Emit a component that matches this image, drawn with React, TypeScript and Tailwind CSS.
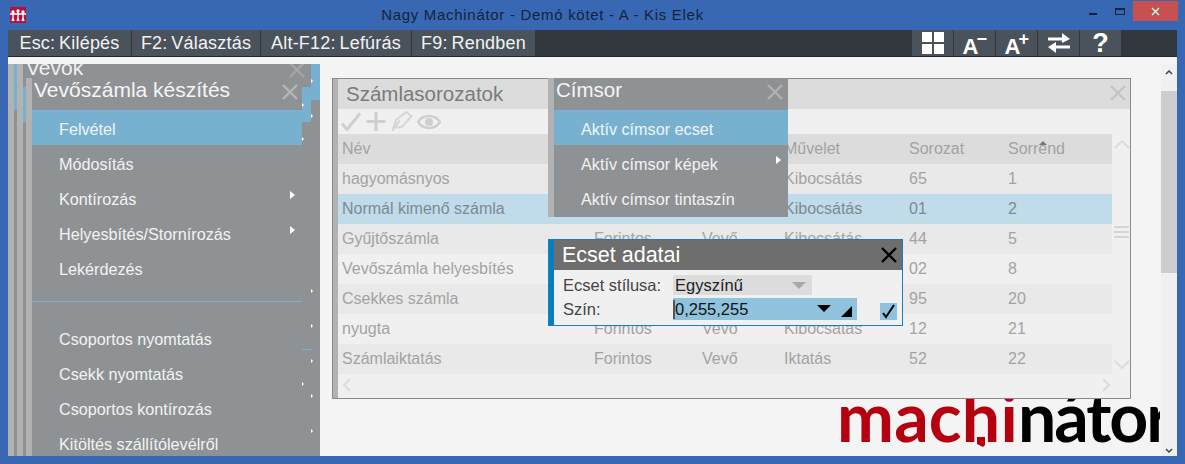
import React from 'react';

const sans = "font-['Liberation_Sans',Arial,sans-serif]";

const menuItems = [
  { label: 'Módosítás' },
  { label: 'Kontírozás', sub: true },
  { label: 'Helyesbítés/Stornírozás', sub: true },
  { label: 'Lekérdezés' },
];

const menuItems2 = [
  'Csoportos nyomtatás',
  'Csekk nyomtatás',
  'Csoportos kontírozás',
  'Kitöltés szállítólevélről',
];

const rows = [
  ['hagyomásnyos', '', '', 'Kibocsátás', '65', '1'],
  ['Normál kimenő számla', '', '', 'Kibocsátás', '01', '2'],
  ['Gyűjtőszámla', 'Forintos', 'Vevő', 'Kibocsátás', '44', '5'],
  ['Vevőszámla helyesbítés', '', '', '', '02', '8'],
  ['Csekkes számla', '', '', '', '95', '20'],
  ['nyugta', 'Forintos', 'Vevő', 'Kibocsátás', '12', '21'],
  ['Számlaiktatás', 'Forintos', 'Vevő', 'Iktatás', '52', '22'],
];

function Cross({ className, size = 18 }: { className: string; size?: number }) {
  return (
    <svg width={size} height={size} viewBox="0 0 18 18" className={className}>
      <path d="M2 2 16 16M16 2 2 16" stroke="currentColor" strokeWidth="2.4" fill="none" />
    </svg>
  );
}

function Row({ cells, index }: { cells: string[]; index: number }) {
  let bg = index % 2 === 0 ? 'bg-[#e9e9e9] text-[#a3a3a3]' : 'bg-[#f0f0f0] text-[#a3a3a3]';
  if (index === 1) bg = 'bg-[#c0dcea] text-[#7d8a92]';
  if (index === -1) bg = 'bg-[#dcdcdc] text-[#a3a3a3]';
  return (
    <div className={`flex h-[30px] items-center text-[16px] ${bg}`}>
      <span className="w-[256px] pl-1">{cells[0]}</span>
      <span className="w-[108px]">{cells[1]}</span>
      <span className="w-[82px]">{cells[2]}</span>
      <span className="w-[125px]">{cells[3]}</span>
      <span className="w-[99px]">{cells[4]}</span>
      <span>{cells[5]}</span>
    </div>
  );
}

function ToolButton({ children }: { children: React.ReactNode }) {
  return (
    <div className="flex h-[26px] w-[41px] items-center justify-center bg-[#4a535b] font-bold text-white">{children}</div>
  );
}

function FontButton({ sign }: { sign: string }) {
  return (
    <ToolButton>
      <span className="relative h-[26px] w-[26px]">
        <span className="absolute left-[1px] top-[6px] text-[22px] leading-[22px]">A</span>
        <span className="absolute left-[15px] top-0 text-[18px] leading-[18px]">{sign}</span>
      </span>
    </ToolButton>
  );
}

function Dot({ className }: { className: string }) {
  return <span className={`absolute h-0 w-0 border-y-[2px] border-l-[2px] border-y-transparent border-l-white ${className}`} />;
}

export default function App() {
  return (
    <div className={`relative flex h-[464px] w-[1185px] flex-col overflow-hidden bg-[#3867b4] ${sans}`}>
      {/* title bar */}
      <div className="relative flex h-[30px] shrink-0 items-center justify-center pr-[100px] text-[15px] tracking-[0.7px] text-[#16233a]">
        <svg width="16" height="16" viewBox="0 0 16 16" className="absolute left-[10px] top-[7px]">
          <rect width="16" height="16" fill="#b3123f" />
          <g stroke="#fff" strokeWidth="1.3" fill="#fff">
            <circle cx="3" cy="5" r="1" />
            <circle cx="8" cy="4" r="1" />
            <circle cx="13" cy="5" r="1" />
            <path d="M0 7H16M3 6V11M8 5V11M13 6V11M2 14 3 11 4 14M7 14 8 11 9 14M12 14 13 11 14 14" fill="none" />
          </g>
        </svg>
        <span>Nagy Machinátor - Demó kötet - A - Kis Elek</span>
        <span className="absolute left-[1089px] top-[13px] h-[2px] w-[8px] bg-[#10243f]" />
        <span className="absolute left-[1115px] top-[8px] h-[7px] w-[10px] border border-t-2 border-[#10243f]" />
        <div className="absolute left-[1133px] top-[1px] flex h-[20px] w-[45px] items-center justify-center bg-[#c75050] text-white">
          <Cross className="text-white" size={9} />
        </div>
      </div>

      {/* toolbar */}
      <div className="mx-2 flex h-[27px] shrink-0 items-stretch justify-between border-b border-[#22272b] bg-[#32383e]">
        <div className="flex gap-px text-[18px] tracking-[0.2px] text-[#f2f2f2]">
          <div className="flex w-[123px] items-center justify-center bg-[#4a535b]">Esc:&thinsp;Kilépés</div>
          <div className="flex w-[128px] items-center justify-center bg-[#4a535b]">F2:&thinsp;Választás</div>
          <div className="flex w-[150px] items-center justify-center bg-[#4a535b]">Alt-F12:&thinsp;Lefúrás</div>
          <div className="flex w-[123px] items-center justify-center bg-[#4a535b]">F9:&thinsp;Rendben</div>
        </div>
        <div className="mr-[56px] flex gap-px">
          <ToolButton>
            <span className="grid grid-cols-2 gap-[2px]">
              <span className="h-[10px] w-[10px] bg-white" />
              <span className="h-[10px] w-[10px] bg-white" />
              <span className="h-[10px] w-[10px] bg-white" />
              <span className="h-[10px] w-[10px] bg-white" />
            </span>
          </ToolButton>
          <FontButton sign="−" />
          <FontButton sign="+" />
          <ToolButton>
            <svg width="24" height="22" viewBox="0 0 24 22">
              <path d="M1 7H17" stroke="#fff" strokeWidth="3" />
              <path d="M15 1 23 7 15 11Z" fill="#fff" />
              <path d="M23 15H7" stroke="#fff" strokeWidth="3" />
              <path d="M9 10 1 15 9 21Z" fill="#fff" />
            </svg>
          </ToolButton>
          <ToolButton>
            <span className="text-[27px] leading-none">?</span>
          </ToolButton>
        </div>
      </div>

      {/* content */}
      <div className="relative mx-2 mb-2 flex min-h-0 flex-1 bg-[#f4f4f4] pt-[7px]">
        {/* menu stack */}
        <div className="relative flex w-[312px] shrink-0 overflow-hidden bg-[#8f9295]">
          <div className="w-[6px] shrink-0 bg-[#b2b2b2]" />
          <div className="w-[3px] shrink-0"><div className="h-[46px] bg-[#78b0d0]" /></div>
          <div className="w-[6px] shrink-0 bg-[#b2b2b2]" />
          <div className="w-[3px] shrink-0"><div className="mt-[23px] h-[35px] bg-[#78b0d0]" /></div>
          <div className="mt-[14px] w-[6px] shrink-0 bg-[#b2b2b2]" />
          <div className="relative w-[270px] shrink-0">
            <div className="flex h-[46px] items-start justify-between pl-[2px] pr-[3px] pt-[14px] text-[21px] leading-[24px] text-[#f5f5f5]">
              <span>Vevőszámla készítés</span>
              <Cross className="mt-[5px] text-[#b5b5b5]" />
            </div>
            <div className="flex h-[35px] items-center bg-[#78b0d0] pl-[27px] pt-[3px] text-[16.2px] text-[#eef5f9]">Felvétel</div>
            {menuItems.map((item) => (
              <div key={item.label} className="relative flex h-[35px] items-center pl-[27px] pt-[3px] text-[16.2px] text-[#f2f2f2]">
                {item.label}
                {item.sub && <span className="absolute right-[7px] top-[11px] h-0 w-0 border-y-[4px] border-l-[5px] border-y-transparent border-l-white" />}
              </div>
            ))}
            <div className="mt-[16px] h-px bg-[#78b0d0]" />
            <div className="mt-[18px]">
              {menuItems2.map((label) => (
                <div key={label} className="flex h-[35px] items-center pl-[27px] pt-[3px] text-[16.2px] text-[#f2f2f2]">{label}</div>
              ))}
            </div>
          </div>

          {/* right edge of the windows stacked behind */}
          <div className="relative w-[18px] shrink-0">
            <div className="absolute left-[9px] top-0 h-[36px] w-[9px] bg-[#78b0d0]" />
            <div className="absolute left-0 top-[23px] h-[35px] w-[9px] bg-[#78b0d0]" />
            <div className="absolute left-0 top-0 h-[23px] w-[9px] bg-[#8f9295]" />
            <div className="absolute left-0 top-[285px] h-px w-[10px] bg-[#78b0d0]" />
            <Dot className="left-[9px] top-[15px]" />
            <Dot className="left-0 top-[39px]" />
            <Dot className="left-[9px] top-[50px]" />
            <Dot className="left-0 top-[73px]" />
            <Dot className="left-[9px] top-[225px]" />
            <Dot className="left-[9px] top-[260px]" />
            <Dot className="left-[9px] top-[295px]" />
            <Dot className="left-0 top-[318px]" />
            <Dot className="left-[9px] top-[330px]" />
            <Dot className="left-[9px] top-[365px]" />
          </div>

          {/* behind window heading, clipped by the frame */}
          <span className="absolute left-[18px] -top-[12px] text-[21px] text-[#f0f0f0]">Vevők</span>
          <Cross className="absolute right-[14px] -top-[3px] text-[#a6a6a6]" />
        </div>

        {/* main */}
        <div className="relative flex-1 overflow-hidden pl-3 pt-[14px]">
          <div className="flex h-[321px] w-[799px] border border-[#8a8a8a] bg-[#f0f0f0]">
            <div className="w-[5px] shrink-0 bg-[#b2b2b2]" />
            <div className="flex min-w-0 flex-1 flex-col">
              <div className="relative flex h-[30px] shrink-0 items-center bg-[#dcdcdc] pl-2 text-[20.5px] text-[#7b7b7b]">
                Számlasorozatok
                <Cross className="absolute right-[3px] top-[5px] text-[#c4c4c4]" />
              </div>
              <div className="flex h-[25px] shrink-0 items-center gap-[3px] pl-[2px]">
                <svg width="22" height="21" viewBox="0 0 22 20"><path d="M2 12 7 18 20 2" stroke="#cfcfcf" strokeWidth="3" fill="none" /></svg>
                <svg width="22" height="21" viewBox="0 0 20 20"><path d="M10 1V19M1 10H19" stroke="#cfcfcf" strokeWidth="3" /></svg>
                <svg width="24" height="21" viewBox="0 0 22 20"><path d="M2 19 5 9 15 1 20 5 11 15 5 16M9 9 3 17" stroke="#d6d6d6" strokeWidth="2" fill="none" /></svg>
                <svg width="24" height="20" viewBox="0 0 24 20"><path d="M1 10C6 2 18 2 23 10 18 18 6 18 1 10Z" fill="none" stroke="#cfcfcf" strokeWidth="2.5" /><circle cx="12" cy="10" r="4" fill="#cfcfcf" /></svg>
              </div>
              <div className="flex min-h-0 flex-1">
                <div className="relative w-[774px] shrink-0">
                  <Row cells={['Név', '', '', 'Művelet', 'Sorozat', 'Sorrend']} index={-1} />
                  <span className="absolute left-[701px] top-[7px] h-0 w-0 border-x-[4px] border-b-[4px] border-x-transparent border-b-[#777]" />
                  {rows.map((r, i) => (
                    <Row key={r[0]} cells={r} index={i} />
                  ))}
                </div>
                <div className="relative flex-1">
                  <svg width="16" height="9" viewBox="0 0 16 9" className="absolute left-[2px] top-[6px]"><path d="M1 8 8 1 15 8" stroke="#dcdcdc" strokeWidth="2" fill="none" /></svg>
                  <div className="absolute left-[2px] top-[92px] flex w-[15px] flex-col gap-[3px]">
                    <span className="h-[2px] bg-[#d6d6d6]" />
                    <span className="h-[2px] bg-[#d6d6d6]" />
                    <span className="h-[2px] bg-[#d6d6d6]" />
                  </div>
                  <svg width="16" height="9" viewBox="0 0 16 9" className="absolute left-[2px] top-[226px]"><path d="M1 1 8 8 15 1" stroke="#dcdcdc" strokeWidth="2" fill="none" /></svg>
                </div>
              </div>
              <div className="mb-[6px] flex h-[14px] w-[773px] shrink-0 items-center justify-between pl-1">
                <svg width="9" height="14" viewBox="0 0 9 14"><path d="M8 1 2 7 8 13" stroke="#dcdcdc" strokeWidth="2" fill="none" /></svg>
                <svg width="9" height="14" viewBox="0 0 9 14"><path d="M1 1 7 7 1 13" stroke="#dcdcdc" strokeWidth="2" fill="none" /></svg>
              </div>
            </div>
          </div>
        </div>

        {/* right scrollbar */}
        <div className="flex w-[16px] shrink-0 flex-col items-center bg-[#f0f0f0]">
          <svg width="8" height="5" viewBox="0 0 8 5" className="mt-[6px]"><path d="M1 4 4 1 7 4" stroke="#444" strokeWidth="1.5" fill="none" /></svg>
          <div className="mt-[16px] h-[182px] w-full bg-[#cdcdcd]" />
          <svg width="8" height="5" viewBox="0 0 8 5" className="mb-[3px] mt-auto"><path d="M1 1 4 4 7 1" stroke="#444" strokeWidth="1.5" fill="none" /></svg>
        </div>

        {/* logo */}
        <div className="absolute left-[827px] top-[342px] h-[50px] w-[325px] overflow-hidden">
          <div className="-mt-[25px] whitespace-nowrap pl-[2px] font-['Lato',sans-serif] text-[68px] font-bold leading-[84px]">
            <span className="tracking-[0.2px] text-[#b4000f]">machi</span>
            <span className="tracking-[-2px] text-black">nátor</span>
          </div>
          <svg width="8" height="10" viewBox="0 0 8 10" className="absolute left-[142px] top-[38px]"><path d="M0 0H8V8L6 10 0 7Z" fill="#b4000f" /></svg>
        </div>

        {/* Címsor popup */}
        <div className="absolute left-[540px] top-[21px] flex h-[139px] w-[240px] bg-[#8f9295]">
          <div className="w-[6px] bg-[#b2b2b2]" />
          <div className="flex-1">
            <div className="relative flex h-[32px] items-start pl-[2px] text-[20.5px] leading-[24px] text-[#f5f5f5]">
              Címsor
              <Cross className="absolute right-[4px] top-[5px] text-[#b0b0b0]" />
            </div>
            <div className="flex h-[35px] items-center bg-[#78b0d0] pl-[27px] pt-[3px] text-[16.2px] text-[#eef5f9]">Aktív címsor ecset</div>
            <div className="relative flex h-[35px] items-center pl-[27px] pt-[3px] text-[16.2px] text-[#f2f2f2]">
              Aktív címsor képek
              <span className="absolute right-[7px] top-[11px] h-0 w-0 border-y-[4px] border-l-[5px] border-y-transparent border-l-white" />
            </div>
            <div className="flex h-[35px] items-center pl-[27px] pt-[3px] text-[16.2px] text-[#f2f2f2]">Aktív címsor tintaszín</div>
          </div>
        </div>

        {/* Ecset adatai dialog */}
        <div className="absolute left-[540px] top-[182px] flex h-[87px] w-[355px] border border-[#1b7fb5] bg-[#f0f0f0]">
          <div className="w-[5px] shrink-0 bg-[#0a7cc0]" />
          <div className="flex-1">
            <div className="flex h-[30px] items-center justify-between bg-[#6e6e6e] pl-[8px] pr-[4px] text-[21.5px] text-white">
              Ecset adatai
              <Cross className="text-black" />
            </div>
            <div className="relative mt-[5px] flex h-[20px] items-center pl-[9px] text-[16.5px] text-[#444]">
              <span className="w-[110px]">Ecset stílusa:</span>
              <div className="flex h-[20px] w-[139px] items-center justify-between bg-[#dcdcdc] pl-[2px] pr-[6px] text-[#222]">
                Egyszínű
                <span className="h-0 w-0 border-x-[7px] border-t-[7px] border-x-transparent border-t-[#a8a8a8]" />
              </div>
            </div>
            <div className="relative mt-[3px] flex h-[22px] items-center pl-[9px] text-[16.5px] text-[#444]">
              <span className="w-[110px]">Szín:</span>
              <div className="relative flex h-[22px] w-[184px] items-center bg-[#8fc2dd] pl-[2px] text-[#111]">
                <span className="absolute left-0 top-[2px] h-[19px] w-[2px] bg-[#555]" />
                0,255,255
                <span className="absolute right-[26px] top-[7px] h-0 w-0 border-x-[7px] border-t-[7px] border-x-transparent border-t-black" />
                <span className="absolute right-[5px] top-[8px] h-0 w-0 border-b-[11px] border-l-[11px] border-b-black border-l-transparent" />
              </div>
              <div className="ml-[23px] mt-[4px] flex h-[17px] w-[17px] items-center justify-center bg-[#8fc2dd]">
                <svg width="15" height="15" viewBox="0 0 15 15"><path d="M2 9 5 13 13 1" stroke="#000" strokeWidth="2" fill="none" /></svg>
              </div>
            </div>
          </div>
        </div>
      </div>
    </div>
  );
}
